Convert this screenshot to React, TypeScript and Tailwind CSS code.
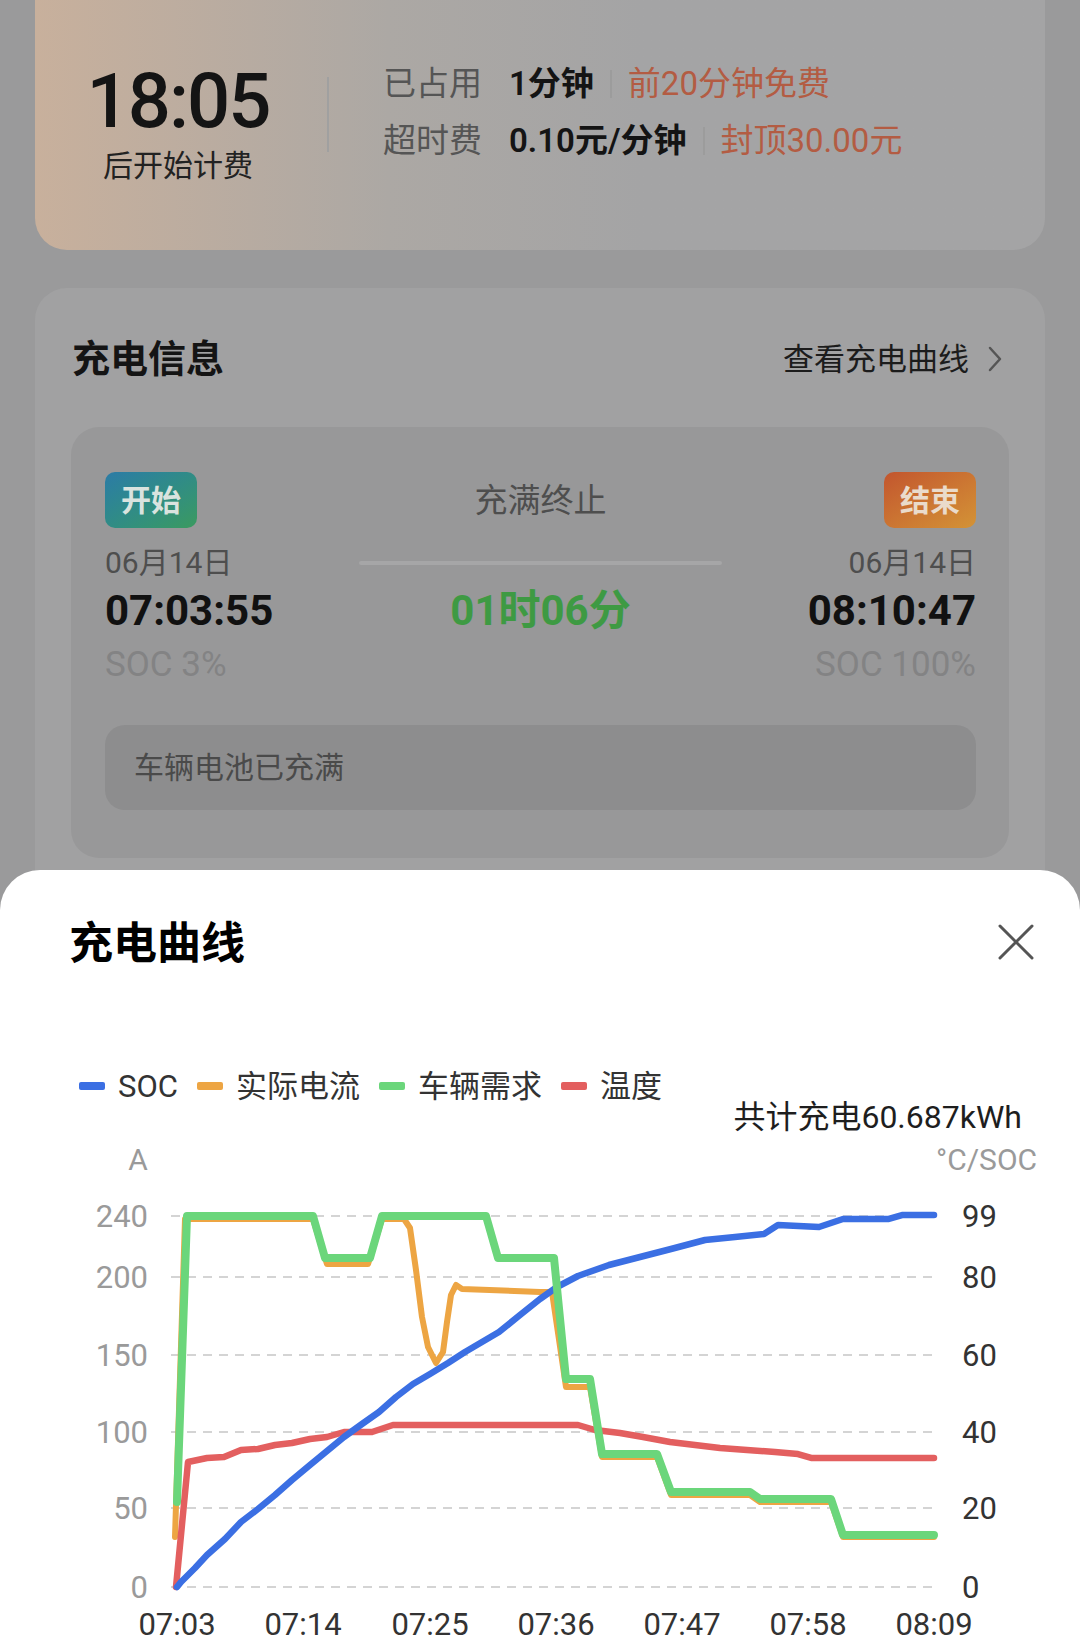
import React from "react";

type Pt = [number, number];

const toPath = (pts: Pt[]) => pts.map((p, i) => `${i ? "L" : "M"}${p[0]} ${p[1]}`).join(" ");

const green: Pt[] = [
  [177, 1500], [187, 1214], [313, 1214], [325, 1256], [370, 1256], [382, 1214], [486, 1214],
  [498, 1256], [554, 1256], [566, 1377], [590, 1377], [602, 1452], [657, 1452], [671, 1490],
  [750, 1490], [760, 1497], [831, 1497], [843, 1533], [934, 1533],
];

const orange: Pt[] = [
  [175, 1535], [185, 1217], [313, 1217], [327, 1262], [368, 1262], [382, 1217], [404, 1217],
  [410, 1226], [416, 1268], [422, 1315], [428, 1345], [436, 1361], [443, 1350], [447, 1320],
  [451, 1293], [456, 1283], [462, 1287], [540, 1290], [552, 1290], [566, 1385], [590, 1385],
  [602, 1455], [657, 1455], [671, 1493], [750, 1493], [760, 1500], [831, 1500], [843, 1535], [934, 1535],
];

const blue: Pt[] = [
  [177, 1585], [181, 1580], [195, 1566], [207, 1553], [225, 1537], [241, 1520], [258, 1507],
  [275, 1493], [292, 1478], [310, 1463], [327, 1449], [344, 1435], [362, 1422], [379, 1410],
  [396, 1395], [413, 1382], [430, 1372], [448, 1361], [465, 1350], [482, 1340], [499, 1330],
  [520, 1313], [540, 1297], [557, 1285], [578, 1274], [609, 1263], [640, 1255], [671, 1247],
  [705, 1238], [735, 1235], [764, 1232], [778, 1223], [819, 1225], [843, 1217], [888, 1217],
  [902, 1213], [934, 1213],
];

const red: Pt[] = [
  [176, 1585], [188, 1460], [207, 1456], [224, 1455], [241, 1448], [258, 1447], [275, 1443],
  [292, 1441], [310, 1437], [327, 1435], [344, 1430], [372, 1430], [393, 1423], [578, 1423],
  [595, 1428], [620, 1431], [643, 1435], [670, 1440], [695, 1443], [720, 1446], [747, 1448],
  [775, 1450], [798, 1452], [812, 1456], [934, 1456],
];

const grid = [1214, 1275, 1353, 1430, 1506, 1585];
const leftLabels = ["240", "200", "150", "100", "50", "0"];
const rightLabels = ["99", "80", "60", "40", "20", "0"];
const xLabels = [
  [177, "07:03"], [303, "07:14"], [430, "07:25"], [556, "07:36"],
  [682, "07:47"], [808, "07:58"], [934, "08:09"],
] as const;

function ChargeChart() {
  return (
    <svg width={1080} height={519} viewBox="0 1130 1080 519" className="block">
      <defs>
        <clipPath id="unitClip">
          <rect x={900} y={1130} width={146} height={60} />
        </clipPath>
      </defs>
      <text x={138} y={1157} textAnchor="middle" dominantBaseline="central" fontSize={30} fill="#9a9a9a">A</text>
      <text x={936} y={1157} dominantBaseline="central" fontSize={30} fill="#9a9a9a" clipPath="url(#unitClip)">°C/SOC</text>
      {grid.map((y, i) => (
        <g key={y}>
          <line x1={171} x2={939} y1={y} y2={y} stroke="#d4d4d4" strokeWidth={2} strokeDasharray="9 7" />
          <text x={148} y={y} textAnchor="end" dominantBaseline="central" fontSize={31} fill="#9a9a9a">{leftLabels[i]}</text>
          <text x={962} y={y} dominantBaseline="central" fontSize={31} fill="#333">{rightLabels[i]}</text>
        </g>
      ))}
      {xLabels.map(([x, t]) => (
        <text key={t} x={x} y={1622} textAnchor="middle" dominantBaseline="central" fontSize={31} fill="#333">{t}</text>
      ))}
      <g fill="none" strokeLinejoin="round" strokeLinecap="round">
        <path d={toPath(orange)} stroke="#eda543" strokeWidth={6} />
        <path d={toPath(red)} stroke="#e35f5f" strokeWidth={6.5} />
        <path d={toPath(blue)} stroke="#3b6fe3" strokeWidth={6.5} />
        <path d={toPath(green)} stroke="#6bd67b" strokeWidth={8} />
      </g>
    </svg>
  );
}

const legend = [
  { color: "bg-[#3b6fe3]", label: "SOC" },
  { color: "bg-[#eda543]", label: "实际电流" },
  { color: "bg-[#6bd67b]", label: "车辆需求" },
  { color: "bg-[#e35f5f]", label: "温度" },
];

export default function App() {
  return (
    <div className="relative w-[1080px] h-[1649px] overflow-hidden bg-[#9a9a9b] font-[Roboto,'Noto_Sans_CJK_SC',sans-serif]">
      {/* billing card */}
      <div className="mx-[35px] h-[250px] rounded-b-[32px] flex items-start bg-linear-to-r from-[#c8b09c] via-[#aca8a4] via-35% to-[#a4a4a5] to-60%">
        <div className="w-[286px] pt-[63px] flex flex-col items-center">
          <div className="text-[76px] leading-none font-medium tracking-[-2px] text-[#141414]">18:05</div>
          <div className="mt-[12px] text-[30px] leading-none text-[#222]">后开始计费</div>
        </div>
        <div className="mt-[77px] ml-[6px] w-[2px] h-[75px] bg-[#a0a0a0]" />
        <div className="ml-[54px] pt-[67px] flex flex-col gap-[24px] text-[33px] leading-[33px]">
          <div className="flex items-center">
            <span className="w-[126px] text-[#555]">已占用</span>
            <span className="font-semibold text-[#141414]">1分钟</span>
            <span className="mx-[16px] w-[2px] h-[28px] bg-[#9c9c9c]" />
            <span className="text-[#b35c43]">前20分钟免费</span>
          </div>
          <div className="flex items-center">
            <span className="w-[126px] text-[#555]">超时费</span>
            <span className="font-semibold text-[#141414]">0.10元/分钟</span>
            <span className="mx-[16px] w-[2px] h-[28px] bg-[#9c9c9c]" />
            <span className="text-[#b35c43]">封顶30.00元</span>
          </div>
        </div>
      </div>

      {/* charging info card */}
      <div className="mx-[35px] mt-[38px] rounded-[32px] bg-[#a1a1a2] pt-[52px] pb-[60px]">
        <div className="flex items-center justify-between pl-[37px] pr-[42px] h-[38px]">
          <span className="text-[38px] leading-none font-bold text-[#141414]">充电信息</span>
          <span className="flex items-center text-[31px] leading-none text-[#1c1c1c]">
            查看充电曲线
            <svg width="16" height="26" viewBox="0 0 16 26" className="ml-[18px]">
              <path d="M3 2 L13 13 L3 24" fill="none" stroke="#555" strokeWidth="2.5" strokeLinecap="round" strokeLinejoin="round" />
            </svg>
          </span>
        </div>

        <div className="mx-[36px] mt-[49px] rounded-[28px] bg-[#989899] pt-[45px] pb-[48px] pl-[34px] pr-[33px]">
          <div className="flex items-center justify-between">
            <div className="w-[92px] h-[56px] rounded-[10px] bg-linear-to-br from-[#2c7ba6] to-[#3b9a5e] flex items-center justify-center text-[30px] font-bold text-[#d9e3df]">开始</div>
            <div className="text-[33px] leading-none text-[#4e4e4e]">充满终止</div>
            <div className="w-[92px] h-[56px] rounded-[10px] bg-linear-to-br from-[#c2552e] to-[#d39336] flex items-center justify-center text-[30px] font-bold text-[#eadbcb]">结束</div>
          </div>

          <div className="mt-[20px] grid grid-cols-[1fr_363px_1fr] items-center">
            <div className="text-[30px] leading-none text-[#4e4e4e]">06月14日</div>
            <div className="h-[4px] rounded-full bg-[#a6a6a7]" />
            <div className="text-right text-[30px] leading-none text-[#4e4e4e]">06月14日</div>

            <div className="mt-[12px] text-[42px] leading-none font-bold text-[#111]">07:03:55</div>
            <div className="mt-[12px] text-center text-[42px] leading-none font-bold text-[#3e9a43]">01时06分</div>
            <div className="mt-[12px] text-right text-[42px] leading-none font-bold text-[#111]">08:10:47</div>

            <div className="mt-[15px] text-[35px] leading-none text-[#838384]">SOC 3%</div>
            <div />
            <div className="mt-[15px] text-right text-[35px] leading-none text-[#838384]">SOC 100%</div>
          </div>

          <div className="mt-[43px] h-[85px] rounded-[20px] bg-[#8d8d8e] flex items-center pl-[29px] text-[30px] text-[#4a4a4a]">
            车辆电池已充满
          </div>
        </div>
      </div>

      {/* bottom sheet */}
      <div className="absolute left-0 right-0 top-[870px] bottom-0 bg-white rounded-t-[40px]">
        <div className="flex items-start justify-between pt-[52px] pl-[69px] pr-[46px]">
          <div className="text-[44px] leading-none font-bold text-black">充电曲线</div>
          <svg width="36" height="36" viewBox="0 0 36 36" className="mt-[2px]">
            <path d="M2 2 L34 34 M34 2 L2 34" stroke="#555" strokeWidth="3" strokeLinecap="round" />
          </svg>
        </div>

        <div className="mt-[105px] pl-[79px] flex items-center h-[30px] text-[31px] leading-none text-[#333]">
          {legend.map((l) => (
            <div key={l.label} className="flex items-center mr-[19px]">
              <span className={`w-[26px] h-[8px] rounded-[2px] ${l.color}`} />
              <span className="ml-[13px]">{l.label}</span>
            </div>
          ))}
        </div>

        <div className="h-[31px] flex items-center justify-end pr-[58px] text-[32px] leading-none text-[#1e1e1e]">
          共计充电60.687kWh
        </div>

        <ChargeChart />
      </div>
    </div>
  );
}
